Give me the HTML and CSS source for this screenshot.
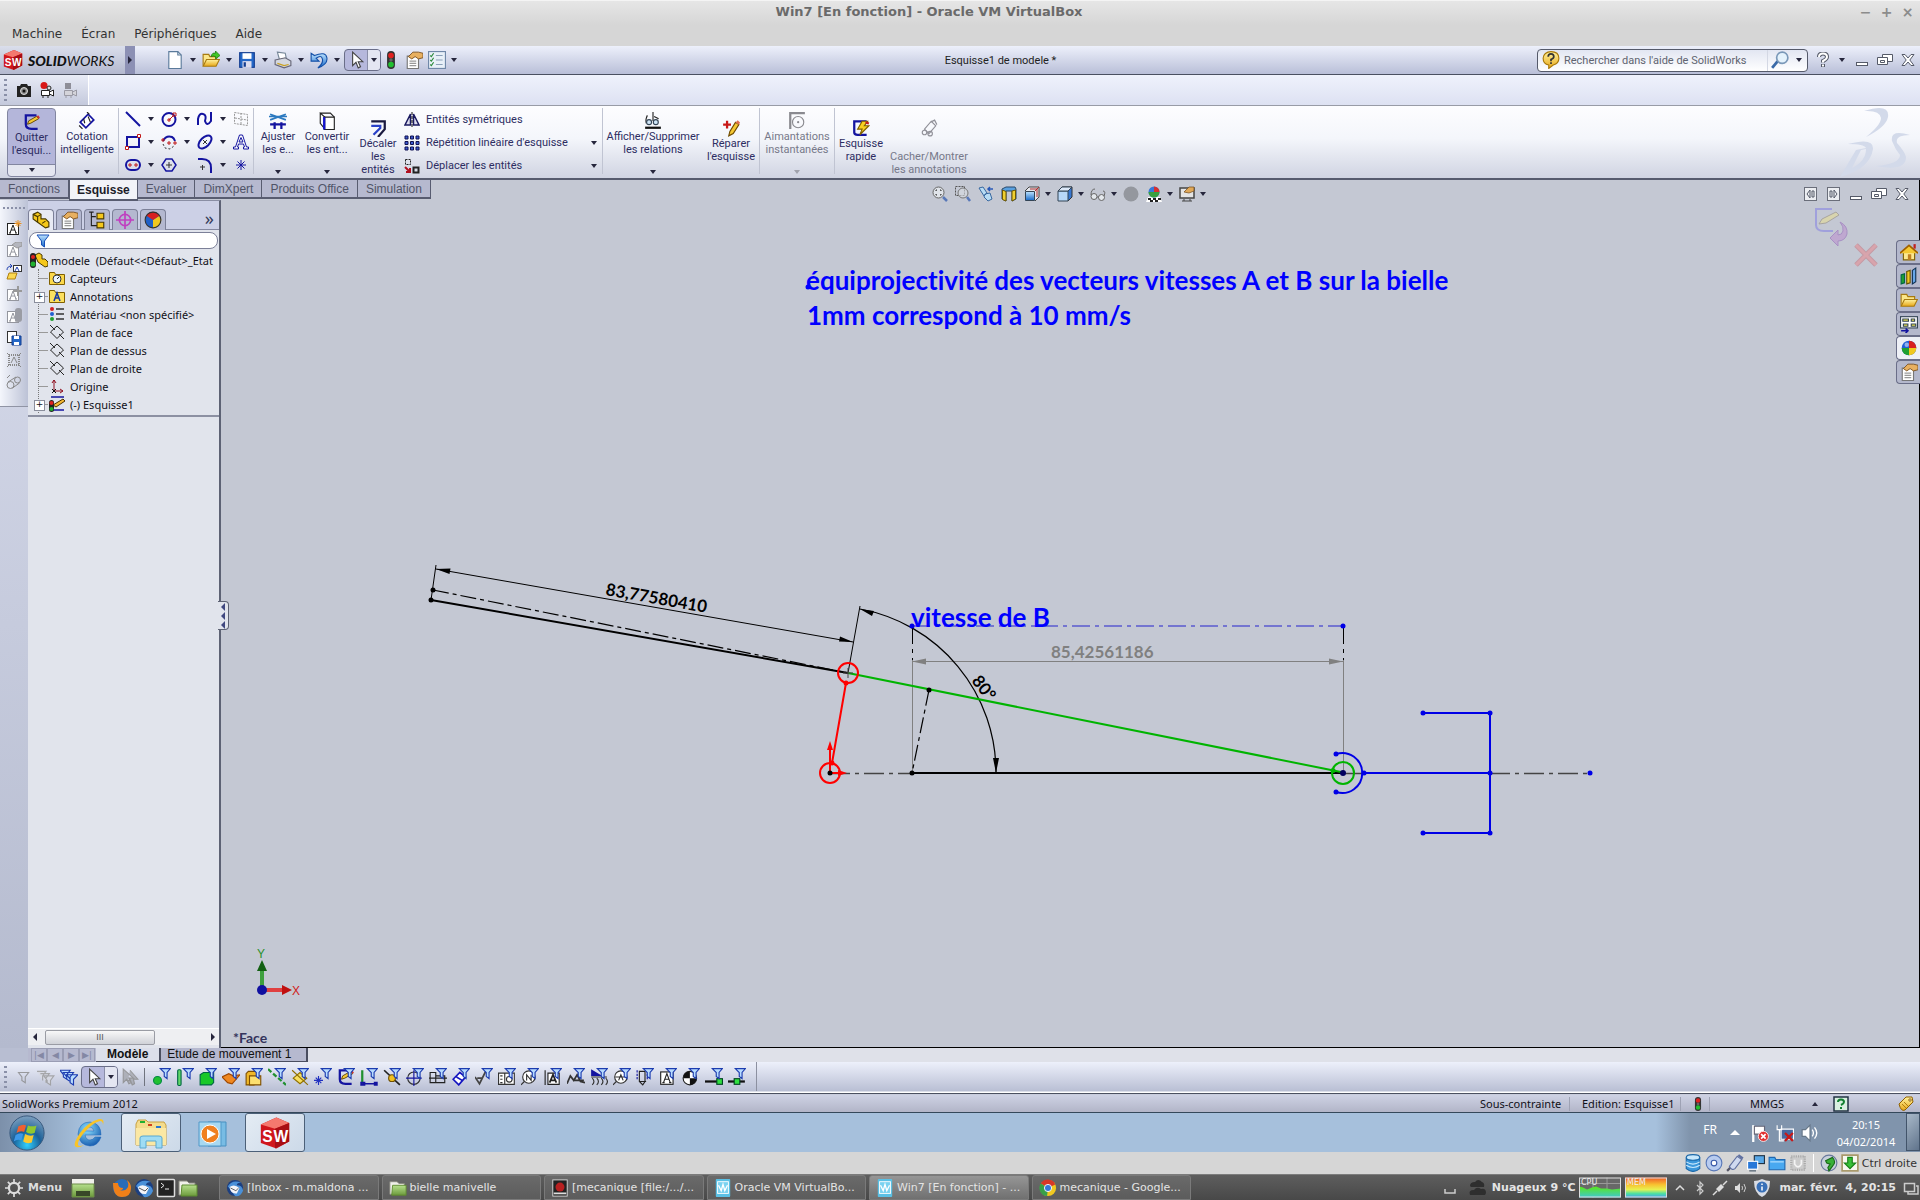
FILE: index.html
```html
<!DOCTYPE html>
<html lang="fr">
<head>
<meta charset="utf-8">
<title>Win7 [En fonction] - Oracle VM VirtualBox</title>
<link rel="stylesheet" href="styles.css">
</head>
<body>
<svg class="defs" aria-hidden="true">
  <defs>
    <linearGradient id="gBlue" x1="0" y1="0" x2="0" y2="1"><stop offset="0" stop-color="#bfe4ff"/><stop offset="1" stop-color="#1668c8"/></linearGradient>
    <linearGradient id="gGold" x1="0" y1="0" x2="0" y2="1"><stop offset="0" stop-color="#fff3a0"/><stop offset="1" stop-color="#e8a818"/></linearGradient>
    <linearGradient id="gGreen" x1="0" y1="0" x2="0" y2="1"><stop offset="0" stop-color="#b6e08c"/><stop offset="1" stop-color="#6c9a3c"/></linearGradient>
    <linearGradient id="gHeat" x1="0" y1="0" x2="0" y2="1"><stop offset="0" stop-color="#f05a28"/><stop offset=".35" stop-color="#f8c030"/><stop offset=".6" stop-color="#e8f050"/><stop offset=".8" stop-color="#50e0a0"/><stop offset="1" stop-color="#40a0f0"/></linearGradient>
    <linearGradient id="gCpu" x1="0" y1="0" x2="0" y2="1"><stop offset="0" stop-color="#58e818"/><stop offset="1" stop-color="#40c8d0"/></linearGradient>
    <radialGradient id="gOrb" cx=".5" cy=".85" r=".9"><stop offset="0" stop-color="#30d0ff"/><stop offset=".45" stop-color="#1a6098"/><stop offset="1" stop-color="#8aa8c4"/></radialGradient>
    <radialGradient id="gIe" cx=".4" cy=".3" r=".8"><stop offset="0" stop-color="#8be0ff"/><stop offset="1" stop-color="#0c50a8"/></radialGradient>
  </defs>
  <symbol id="funnel" viewBox="0 0 16 16"><path d="M6.500.5h9L12.500 4v5.500L10 7.500V4z" fill="#b8dcff" stroke="#1c3cb0"/></symbol>
  <symbol id="cube" viewBox="0 0 24 24"><path d="M2 6 13 1l9 4v13l-9 5-11-4z" fill="#d0161c"/><path d="M2 6 13 1l9 4-10 4z" fill="#f4786e"/><path d="M12 9l10-4v13l-10 5z" fill="#a80d14"/></symbol>
  <symbol id="lights" viewBox="0 0 16 16"><rect x="4.500" y="0" width="7" height="16" rx="3.500" fill="#333"/><circle cx="8" cy="4" r="2.500" fill="#e02020"/><circle cx="8" cy="8" r="1.500" fill="#666"/><circle cx="8" cy="12" r="2.500" fill="#20c030"/></symbol>
  <symbol id="props" viewBox="0 0 16 16"><path d="M2 4.500h10v11H2z" fill="#fff" stroke="#777"/><path d="M4 9h6M4 11h6M4 13h6" stroke="#999"/><path d="M3 5l4-4 5 0 4 1v4l-4 1-3-2-3 2z" fill="#e8b060" stroke="#7a5020" stroke-width=".8"/></symbol>
  <symbol id="arrow" viewBox="0 0 16 16"><path d="M5 1v12l3-3 2 5 2-1-2-4.500h4z" fill="#fff" stroke="#444"/></symbol>
  <symbol id="part" viewBox="0 0 16 16"><path d="M1 3l4-2 3 2v4l4 0 3 3v4l-3 1-7-5-4-3z" fill="#f5c81c" stroke="#4a3a00"/><path d="M1 3l4 2v5M5 5l3-2M9 11l3-2" stroke="#4a3a00"/></symbol>
  <symbol id="pencil" viewBox="0 0 16 16"><path d="M12 2H2.500v8q0 4 5 4H13" stroke="#1414a0" stroke-width="2"/><path d="M4 10l1-3 7-4 2 2-7 4z" fill="#f5c832" stroke="#5a4000" stroke-width=".8"/><path d="M12 3l2 2 1-1-1.500-2z" fill="#d03030"/></symbol>
  <symbol id="ball" viewBox="0 0 16 16"><circle cx="8" cy="8" r="6.500" fill="#2060d8"/><path d="M8 1.500A6.500 6.500 0 0 1 14.500 8H8z" fill="#d82020"/><path d="M14.500 8A6.500 6.500 0 0 1 8 14.500V8z" fill="#f0c820"/><path d="M8 14.500A6.500 6.500 0 0 1 1.500 8H8z" fill="#20a030"/><circle cx="6" cy="5" r="2" fill="#fff" opacity=".5"/></symbol>
  <symbol id="folder" viewBox="0 0 16 16"><path d="M1 13V3h5l1 2h6v3" fill="#fbe68a" stroke="#a87a10"/><path d="M1 13.500l3-6h11.500l-3 6z" fill="url(#gGold)" stroke="#a87a10"/></symbol>
  <symbol id="plane" viewBox="0 0 16 16"><path d="M8 2l6.500 6L8 14.500 1.500 8zM1 1l5 5M10 10l5 5" stroke="#222"/></symbol>
  <symbol id="atext" viewBox="0 0 16 16"><rect x="1.500" y="3.500" width="11" height="11" fill="#fff" stroke="currentColor"/><path d="M4 13l3-8 3 8M5 10h4M3 13h2M9 13h2" stroke="currentColor"/></symbol>
  <symbol id="min" viewBox="0 0 16 16"><rect x="2.500" y="10.500" width="11" height="3" fill="#fff" stroke="#555a68"/></symbol>
  <symbol id="restore" viewBox="0 0 16 16"><path d="M5.500 2.500h10v7h-10z" fill="#fff" stroke="#555a68"/><path d="M.5 5.500h10v7H.5z" fill="#fff" stroke="#555a68"/><path d="M3.500 8.500h4v2h-4z" stroke="#555a68"/></symbol>
  <symbol id="close" viewBox="0 0 16 16"><path d="M2 2.500h3l3 3.500 3-3.500h3L9.800 8l4.200 5.500h-3L8 10l-3 3.500H2L6.200 8z" fill="#fff" stroke="#555a68"/></symbol>
  <symbol id="bird" viewBox="0 0 20 20"><circle cx="10" cy="10" r="9" fill="#1c3f80"/><path d="M2 8q5-8 15-4-5 0-5 3 6 0 7 6-3 7-9 6" fill="#4a90d8"/><path d="M4 9q5-4 11 1l-3 6q-7 1-8-7z" fill="#f4f4f8"/><path d="M5 10l6 3 3-3" stroke="#555"/></symbol>
  <symbol id="gfolder" viewBox="0 0 20 20"><path d="M1 3h8l2 2h6v12H1z" fill="#f0f0ea" stroke="#8a8a80"/><path d="M4 7h15v11H3z" fill="url(#gGreen)" stroke="#5d8a30"/></symbol>
  <symbol id="vm" viewBox="0 0 20 20"><rect x="2" y="0" width="16" height="20" rx="1" fill="#5bc0e4"/><rect x="4" y="3" width="12" height="13" fill="#7ad2f0" stroke="#fff"/><path d="M5 7l3 6 2-7 2 7 3-6" stroke="#fff" stroke-width="1.500"/></symbol>
</svg>

<header class="vbox-head">
  <div class="vbox-title">
    <h1>Win7 [En fonction] - Oracle VM VirtualBox</h1>
    <div class="vbox-ctl"><button aria-label="Réduire">−</button><button aria-label="Agrandir">+</button><button aria-label="Fermer">×</button></div>
  </div>
  <nav class="vbox-menu"><button>Machine</button><button>Écran</button><button>Périphériques</button><button>Aide</button></nav>
</header>

<div class="sw-bar">
  <div class="brand"><svg class="i22" viewBox="0 0 24 24"><use href="#cube"/><text x="3" y="18" class="cube-s">S</text><text x="11" y="18" class="cube-s">W</text></svg><span class="brand-name"><b>SOLID</b>WORKS</span></div>
  <button class="brand-arrow" aria-label="Menus"><i class="caret right"></i></button>
  <div class="std-tools">
    <button class="tool" aria-label="Nouveau"><svg class="i18" viewBox="0 0 16 16"><path d="M2.500.5h8l3 3v12h-11z" fill="#fff" stroke="#5a7a9a"/><path d="M10.500.5v3h3" stroke="#5a7a9a"/></svg></button><button class="drop" aria-label="Plus"><i class="caret"></i></button>
    <button class="tool" aria-label="Ouvrir"><svg class="i18" viewBox="0 0 16 16"><use href="#folder"/><path d="M8 5q1-4 4-3V0l4 4-4 3V5q-2-1-4 0z" fill="#40c828" stroke="#1c7810" stroke-width=".7"/></svg></button><button class="drop" aria-label="Plus"><i class="caret"></i></button>
    <button class="tool" aria-label="Enregistrer"><svg class="i18" viewBox="0 0 16 16"><rect x="1.500" y="1.500" width="13" height="13" fill="#2468c8" stroke="#123c90"/><rect x="4" y="2" width="8" height="5" fill="#fff"/><rect x="4" y="9" width="8" height="6" fill="#dde"/><rect x="5" y="10" width="2" height="4" fill="#123c90"/></svg></button><button class="drop" aria-label="Plus"><i class="caret"></i></button>
    <button class="tool" aria-label="Imprimer"><svg class="i18" viewBox="0 0 16 16"><path d="M3 1l7 1 1 5-6 1z" fill="#fff" stroke="#789"/><path d="M1 8l9-2 5 3v4l-6 2-8-3z" fill="#d4d8e0" stroke="#667"/><path d="M3 11l6 2 4-1" stroke="#c8a020"/></svg></button><button class="drop" aria-label="Plus"><i class="caret"></i></button>
    <button class="tool" aria-label="Annuler"><svg class="i18" viewBox="0 0 16 16"><path d="M1 2v7h7L5.500 6.500Q10 3 11 7t-4 8q9-3 8-9T4 4z" fill="url(#gBlue)" stroke="#1450a8"/></svg></button><button class="drop" aria-label="Plus"><i class="caret"></i></button>
    <span class="split pull"><button aria-label="Sélectionner"><svg class="i18"><use href="#arrow"/></svg></button><button class="split-d" aria-label="Plus"><i class="caret"></i></button></span>
    <button class="tool wide" aria-label="Reconstruire"><svg class="i18"><use href="#lights"/></svg></button>
    <button class="tool wide" aria-label="Propriétés"><svg class="i18"><use href="#props"/></svg></button>
    <button class="tool wide" aria-label="Options"><svg class="i18" viewBox="0 0 16 16"><rect x=".5" y=".5" width="15" height="15" fill="#e8f0f8" stroke="#7088a8"/><path d="M2 4l1 1 2-3M2 8l1 1 2-3M2 12l1 1 2-3" stroke="#2a8a3a"/><path d="M7 4h6M7 8h6M7 12h6" stroke="#8aa0b8"/></svg></button><button class="drop narrow" aria-label="Plus"><i class="caret"></i></button>
  </div>
  <span class="doc-name">Esquisse1 de modele *</span>
  <div class="sw-right">
    <form class="search">
      <svg class="i18" viewBox="0 0 16 16"><path d="M8 .5c4 0 7 2 7 6s-3 5.500-5 6l-4 3 0-3C3 12 1 10 1 6.500s3-6 7-6z" fill="url(#gGold)" stroke="#a87808"/><path d="M5.500 5q0-2.500 2.500-2.500T10.500 5Q10.500 6.500 8 7.500V9M8 10v1.500" stroke="#333" stroke-width="1.500"/></svg>
      <input type="text" aria-label="Rechercher" placeholder="Rechercher dans l'aide de SolidWorks">
      <button type="button" class="search-go" aria-label="Lancer"><svg class="i18" viewBox="0 0 16 16"><path d="M1 15l5-6" stroke="#3a6aa8" stroke-width="2.500"/><circle cx="10" cy="6" r="5" fill="#e4f2fc" stroke="#7a98b8" stroke-width="1.500"/></svg></button>
      <button type="button" class="search-d" aria-label="Plus"><i class="caret"></i></button>
    </form>
    <button class="wbtn" aria-label="Aide"><svg class="i16" viewBox="0 0 16 16"><path d="M4 5q0-3.500 4-3.500T12 5q0 2-4 4v1.500M8 12v3" stroke="#555a68" stroke-width="4"/><path d="M4 5q0-3.500 4-3.500T12 5q0 2-4 4v1.500M8 12.500v2" stroke="#fff" stroke-width="2"/></svg></button>
    <button class="drop" aria-label="Plus"><i class="caret"></i></button>
    <button class="wbtn" aria-label="Réduire"><svg class="i16"><use href="#min"/></svg></button>
    <button class="wbtn" aria-label="Restaurer"><svg class="i16"><use href="#restore"/></svg></button>
    <button class="wbtn" aria-label="Fermer"><svg class="i16"><use href="#close"/></svg></button>
  </div>
</div>

<div class="capture-bar">
  <div class="capture-tools">
    <i class="grip"></i>
    <button class="cap" aria-label="Capturer"><svg class="i16" viewBox="0 0 16 16"><path d="M1 4h3l1-2h6l1 2h3v11H1z" fill="#222"/><circle cx="8" cy="9" r="3.500" fill="#888" stroke="#ddd"/><circle cx="8" cy="9" r="1.500" fill="#111"/></svg></button>
    <button class="cap" aria-label="Filmer"><svg class="i16" viewBox="0 0 16 16"><path d="M2.500 8.500h8v5h-8zM10.500 10l4-2v6l-4-2M3 15h2M8 15h2" fill="#fff" stroke="#222"/><circle cx="5" cy="3.500" r="3.500" fill="#d81818"/><circle cx="10" cy="6" r="2" fill="#ddd" stroke="#222"/></svg></button>
    <button class="cap" aria-label="Arrêter"><svg class="i16" viewBox="0 0 16 16"><path d="M2.500 8.500h8v5h-8zM10.500 10l4-2v6l-4-2M3 15h2M8 15h2" fill="#d4d4da" stroke="#9a9aa4"/><path d="M3 1h6v6H3z" fill="#8e8e98"/></svg></button>
  </div>
</div>

<div class="ribbon">
  <button class="big on w49"><svg class="i18"><use href="#pencil"/></svg><span>Quitter<br>l'esqui...</span><i class="caret"></i></button>
  <button class="big w60"><svg class="i18" viewBox="0 0 16 16"><path d="M2 9l7-7 5 5-7 7z" fill="#fff" stroke="#1414a0" stroke-width="1.500"/><path d="M5 6l1 4M9 4l2 5M1 12l3 3M8 0l2 2" stroke="#222"/></svg><span>Cotation<br>intelligente</span><i class="caret"></i></button>
  <i class="sep"></i>
  <div class="sketch-grid">
    <button aria-label="Ligne"><svg class="i16" viewBox="0 0 16 16"><path d="M1 1l14 14" stroke="#1414a0" stroke-width="2"/></svg></button><button aria-label="Plus"><i class="caret"></i></button>
    <button aria-label="Cercle"><svg class="i16" viewBox="0 0 16 16"><circle cx="8" cy="8.500" r="6.500" stroke="#1414a0" stroke-width="2"/><path d="M8 9l4-4M7 8h2v2H7zM12 2h3v3h-3z" stroke="#c01818"/></svg></button><button aria-label="Plus"><i class="caret"></i></button>
    <button aria-label="Spline"><svg class="i16" viewBox="0 0 16 16"><path d="M1 14V8Q2 2 6 3t2 7q2 6 6 0V1" stroke="#1414a0" stroke-width="2"/></svg></button><button aria-label="Plus"><i class="caret"></i></button>
    <button aria-label="Plan"><svg class="i16" viewBox="0 0 16 16"><path d="M1.500 1.500l13 2v11l-13-2zM8 2v12M2 7l12 2" stroke="#999" stroke-dasharray="2 1"/></svg></button>
    <button aria-label="Rectangle"><svg class="i16" viewBox="0 0 16 16"><rect x="2" y="3" width="12" height="10" stroke="#1414a0" stroke-width="2"/><path d="M.5 12.500h3v3h-3zM12.500.5h3v3h-3z" fill="#fff" stroke="#c01818"/></svg></button><button aria-label="Plus"><i class="caret"></i></button>
    <button aria-label="Arc"><svg class="i16" viewBox="0 0 16 16"><path d="M2 7q3-6 9-4 2 1 3 4" stroke="#1414a0" stroke-width="2"/><path d="M2 10l2 4 5 1 4-3" stroke="#333" stroke-dasharray="2 2"/><path d="M7 8h2v2H7zM13 8h2v2h-2zM1 5h2v2H1z" stroke="#c01818"/></svg></button><button aria-label="Plus"><i class="caret"></i></button>
    <button aria-label="Ellipse"><svg class="i16" viewBox="0 0 16 16"><ellipse cx="8" cy="8" rx="8" ry="4.500" transform="rotate(-45 8 8)" stroke="#1414a0" stroke-width="2"/><path d="M6 10l4-4M6 6l4 4" stroke="#333"/></svg></button><button aria-label="Plus"><i class="caret"></i></button>
    <button aria-label="Texte"><svg class="i16" viewBox="0 0 16 16"><path d="M6.500 1h3l4 12h2v2h-5v-2h1l-1-3h-5l-1 3h1v2H.5v-2h2zM6 8h4L8 3.500z" fill="#fff" stroke="#1414a0"/></svg></button>
    <button aria-label="Rainure"><svg class="i16" viewBox="0 0 16 16"><rect x="1" y="3" width="14" height="10" rx="5" stroke="#1414a0" stroke-width="2"/><path d="M4 7h2v2H4zM10 7h2v2h-2z" stroke="#c01818"/></svg></button><button aria-label="Plus"><i class="caret"></i></button>
    <button aria-label="Polygone"><svg class="i16" viewBox="0 0 16 16"><path d="M5 2h6l4 6-4 6H5L1 8z" stroke="#1414a0" stroke-width="1.500"/><path d="M5 8h6M8 5v6" stroke="#333"/></svg></button><span></span>
    <button aria-label="Congé"><svg class="i16" viewBox="0 0 16 16"><path d="M1 2h4q9 0 9 9v5" stroke="#1414a0" stroke-width="2"/><path d="M3 10h5M5.500 8v5" stroke="#333"/></svg></button><button aria-label="Plus"><i class="caret"></i></button>
    <button aria-label="Point"><svg class="i16" viewBox="0 0 16 16"><path d="M8 3v10M3 8h10M4.500 4.500l7 7M11.500 4.500l-7 7" stroke="#1414a0"/></svg></button>
  </div>
  <i class="sep"></i>
  <button class="big w48"><svg class="i18" viewBox="0 0 16 16"><path d="M1 11h14M5 9v6M11 9v6" stroke="#1414a0" stroke-width="2"/><path d="M1 2l14 5M1 7l14-5M0 4h16" stroke="#2c7ac0" stroke-width="1.500"/></svg><span>Ajuster<br>les e...</span><i class="caret"></i></button>
  <button class="big w50"><svg class="i18" viewBox="0 0 16 16"><path d="M5.500 4.500h9v11h-9z" fill="#fff" stroke="#222"/><path d="M2 1v9l4 5V4.500zM2 1h9l3.500 3.500" stroke="#222"/><path d="M5.500 4.500v11" stroke="#1414d0" stroke-width="2"/></svg><span>Convertir<br>les ent...</span><i class="caret"></i></button>
  <button class="big low w52"><svg class="i18" viewBox="0 0 16 16"><path d="M2 2h12v7l-6 7" stroke="#1a1a40" stroke-width="2"/><path d="M2 6h8v2l-6 6" stroke="#2840c8" stroke-width="2"/></svg><span>Décaler<br>les<br>entités</span></button>
  <div class="list">
    <button><svg class="i16" viewBox="0 0 16 16"><path d="M6.500 2v11H1zM9.500 2v11H15z" fill="#dde" stroke="#1a1a60" stroke-width="1.500"/><path d="M8 0v16" stroke="#111" stroke-dasharray="3 1"/></svg><span>Entités symétriques</span></button>
    <button><svg class="i16" viewBox="0 0 16 16"><path d="M1 1h3v3H1zM6.500 1h3v3h-3zM12 1h3v3h-3zM1 6.500h3v3H1zM6.500 6.500h3v3h-3zM12 6.500h3v3h-3zM1 12h3v3H1zM6.500 12h3v3h-3zM12 12h3v3h-3z" fill="#3858d0" stroke="#101050"/></svg><span>Répétition linéaire d'esquisse</span><i class="caret"></i></button>
    <button><svg class="i16" viewBox="0 0 16 16"><path d="M1.500 1.500h5v5h-5z" stroke="#222" stroke-dasharray="2 1"/><path d="M1 9l5 5M6 10v4H2" stroke="#b01020" stroke-width="2"/><path d="M9.500 9.500h5v5h-5z" stroke="#222" stroke-width="2"/></svg><span>Déplacer les entités</span><i class="caret"></i></button>
  </div>
  <i class="sep"></i>
  <button class="big w100"><svg class="i18" viewBox="0 0 16 16"><path d="M1 14h14" stroke="#111" stroke-width="2"/><path d="M8 0v8M3 3q-2 4-1 7M9 4l4 2" stroke="#222"/><circle cx="4.500" cy="9" r="2.200" fill="#cfe6f8" stroke="#345"/><circle cx="10.500" cy="9" r="2.200" fill="#cfe6f8" stroke="#345"/></svg><span>Afficher/Supprimer<br>les relations</span><i class="caret"></i></button>
  <button class="big low w56"><svg class="i18" viewBox="0 0 16 16"><path d="M1 5h7M4.500 1.500v7" stroke="#c81818" stroke-width="2"/><path d="M6 15l1-4 5-8 3 2-5 8z" fill="#f5c832" stroke="#704c00"/><path d="M12 3l3 2 1-2-2-2z" fill="#e07050"/></svg><span>Réparer<br>l'esquisse</span></button>
  <i class="sep"></i>
  <button class="big w74" disabled><svg class="i18" viewBox="0 0 16 16"><path d="M2 15V1h13" stroke="#8a8a90" stroke-width="2"/><circle cx="9" cy="9" r="5" stroke="#8a8a90"/><circle cx="9" cy="9" r="1" fill="#8a8a90"/></svg><span>Aimantations<br>instantanées</span><i class="caret"></i></button>
  <i class="sep"></i>
  <button class="big low w52"><svg class="i18" viewBox="0 0 16 16"><path d="M13 2H2v10q0 2 3 2h8" stroke="#1414a0" stroke-width="2"/><path d="M9 2h5l-3 4h4l-8 8 2-5H5z" fill="#f8d020" stroke="#806000"/><path d="M12 3l3 1" stroke="#c02020" stroke-width="2"/></svg><span>Esquisse<br>rapide</span></button>
  <button class="big low tall w84" disabled><svg class="i18" viewBox="0 0 16 16"><path d="M4 9l6-7 4 4-6 7zM9 3l4-2 2 4" stroke="#909098"/><circle cx="4" cy="12" r="2" stroke="#909098"/><circle cx="9" cy="13" r="2" stroke="#909098"/></svg><span>Cacher/Montrer<br>les annotations</span></button>
  <svg class="ds" viewBox="0 0 72 70"><path d="M24 4Q50-4 48 10 46 20 26 30 41 18 41 11 40 3 24 4zM8 37Q34 30 33 42 30 62 0 70L16 43 26 41Q24 37 8 37zM12 61q14-7 14-19l-5 1zM70 28Q50 22 52 34q3 8 8 14 0 9-24 11 30 6 30-9-1-5-9-14-2-8 13-8z"/></svg>
</div>

<main class="workspace">
  <nav class="cmd-tabs"><button>Fonctions</button><button class="on">Esquisse</button><button>Evaluer</button><button>DimXpert</button><button>Produits Office</button><button>Simulation</button></nav>

  <aside class="side">
    <div class="strip">
      <i class="grip-h"></i>
      <button class="st" aria-label="Note"><svg class="i16"><use href="#atext"/></svg><svg class="i16 over" viewBox="0 0 16 16"><path d="M12 0v7M8.500 3.500h7M9.500 1l5 5M14.500 1l-5 5" stroke="#e89020"/></svg></button>
      <button class="st off" aria-label="Style"><svg class="i16"><use href="#atext"/></svg><svg class="i16 over" viewBox="0 0 16 16"><path d="M6 3l4-3h6v4l-5 2z" fill="#b4b6be" stroke="#999"/></svg></button>
      <button class="st" aria-label="Charger"><svg class="i16" viewBox="0 0 16 16"><rect x="7.500" y="1.500" width="8" height="6" fill="#fff" stroke="#333"/><path d="M9 7l2-4 2 4M1 6q0-4 5-4M4 0l2 2-2 2" stroke="#2040b0"/><path d="M1 15l2-6h8l-2 6z" fill="#fbd850" stroke="#b08010"/></svg></button>
      <button class="st off" aria-label="Ajouter"><svg class="i16"><use href="#atext"/></svg><svg class="i16 over" viewBox="0 0 16 16"><path d="M12 0v10M7 5h9" stroke="#999" stroke-width="2"/></svg></button>
      <button class="st off" aria-label="Mettre à jour"><svg class="i16"><use href="#atext"/></svg><svg class="i16 over" viewBox="0 0 16 16"><rect x="9" y="0" width="7" height="14" rx="3" fill="#9a9ca4"/></svg></button>
      <button class="st" aria-label="Enregistrer"><svg class="i16" viewBox="0 0 16 16"><rect x="1.500" y="1.500" width="9" height="11" fill="#fff" stroke="#333"/><path d="M6 6h9v9H6z" fill="#2468c8" stroke="#123c90"/><path d="M8 6h5v3H8zM8 12h5v3H8z" fill="#fff"/></svg></button>
      <button class="st off" aria-label="Bloc"><svg class="i16" viewBox="0 0 16 16"><rect x="3" y="3" width="10" height="10" stroke="#888" stroke-width="2" stroke-dasharray="1 1"/><path d="M5 11l3-6 3 6M1 1l2 2M15 1l-2 2M1 15l2-2M15 15l-2-2" stroke="#888"/></svg></button>
      <button class="st off" aria-label="Courroie"><svg class="i16" viewBox="0 0 16 16"><circle cx="4.500" cy="11" r="3.500" stroke="#888"/><circle cx="11.500" cy="6" r="3" stroke="#888"/><path d="M2 8l8-5M6.500 14l7-5M1 4l3-3" stroke="#888"/></svg></button>
    </div>
    <div class="panel">
      <div class="ptabs">
        <button class="on" aria-label="Arbre"><svg class="i18"><use href="#part"/></svg></button>
        <button aria-label="Propriétés"><svg class="i18"><use href="#props"/></svg></button>
        <button aria-label="Configurations"><svg class="i18" viewBox="0 0 16 16"><path d="M1 1h4M3 1v12h5M3 5h4" stroke="#222"/><path d="M8 2h6v5H8zM8 10h6v5H8z" fill="#f5c81c" stroke="#4a3a00"/></svg></button>
        <button aria-label="DimXpert"><svg class="i18" viewBox="0 0 16 16"><circle cx="8" cy="8" r="5" stroke="#c040c0" stroke-width="1.500"/><path d="M8 0v16M0 8h16" stroke="#c040c0" stroke-width="1.500"/></svg></button>
        <button aria-label="Affichage"><svg class="i18" viewBox="0 0 16 16"><circle cx="8" cy="8" r="7" fill="#2060c8"/><path d="M8 8l6-4a7 7 0 0 1-6 11z" fill="#f0c820"/><path d="M8 8L2 4a7 7 0 0 1 12 0z" fill="#d82020"/><circle cx="8" cy="8" r="7" stroke="#333"/></svg></button>
        <span class="more">»</span>
      </div>
      <label class="filter"><svg class="i16" viewBox="0 0 16 16"><path d="M2 2h12L9.500 8v6L6.500 12V8z" fill="url(#gBlue)" stroke="#1850b8"/></svg><input type="text" aria-label="Filtre"></label>
      <div class="tree">
        <div class="root"><svg class="i18" viewBox="0 0 18 16"><path d="M5 3l4-2 3 2v4h3l3 3v4l-3 1-7-5z" fill="#f5c81c" stroke="#4a3a00"/><rect x="0" y="1" width="6" height="15" rx="3" fill="#222"/><circle cx="3" cy="5" r="2" fill="#e02020"/><circle cx="3" cy="12" r="2.500" fill="#20b030"/></svg><span>modele&nbsp; (Défaut&lt;&lt;Défaut&gt;_Etat</span></div>
        <ul>
          <li><svg class="i16" viewBox="0 0 16 16"><path d="M.5 2.500h5l1 2h9v10H.5z" fill="#fbd84a" stroke="#806000"/><circle cx="8" cy="9" r="4" fill="#e8f4ff" stroke="#333"/><path d="M8 9l2-2" stroke="#222"/></svg>Capteurs</li>
          <li class="plus"><svg class="i16" viewBox="0 0 16 16"><path d="M.5 2.500h5l1 2h9v10H.5z" fill="#fbe060" stroke="#806000"/><path d="M5 13l3-8 3 8M6 10h4" stroke="#1838a0" stroke-width="1.500"/></svg>Annotations</li>
          <li><svg class="i16" viewBox="0 0 16 16"><circle cx="3" cy="3" r="2" fill="#d02020"/><circle cx="3" cy="8" r="2" fill="#2060d0"/><circle cx="3" cy="13" r="2" fill="#20a030"/><path d="M7 3h8M7 8h8M7 13h8" stroke="#333" stroke-width="1.500"/></svg>Matériau &lt;non spécifié&gt;</li>
          <li><svg class="i16"><use href="#plane"/></svg>Plan de face</li>
          <li><svg class="i16"><use href="#plane"/></svg>Plan de dessus</li>
          <li><svg class="i16"><use href="#plane"/></svg>Plan de droite</li>
          <li><svg class="i16" viewBox="0 0 16 16"><path d="M5 13V2M3 5l2-3 2 3M5 13h9M11 11l3 2-3 2" stroke="#901020"/><path d="M3 11l4 4M7 11l-4 4" stroke="#111"/></svg>Origine</li>
          <li class="plus"><svg class="i16" viewBox="0 0 16 16"><path d="M2 1h13M4 14h11" stroke="#1414a0" stroke-width="1.500"/><path d="M4 9l10-6 2 2-9 6z" fill="#f5b832" stroke="#4a3000"/><rect x="0" y="4" width="5" height="12" rx="2.500" fill="#222"/><circle cx="2.500" cy="7" r="2" fill="#e02020"/><circle cx="2.500" cy="13" r="2" fill="#20b030"/></svg>(-) Esquisse1</li>
        </ul>
      </div>
      <div class="panel-rest"></div>
      <div class="hscroll"><i class="caret left"></i><i class="thumb">III</i><i class="caret right"></i></div>
      <button class="handle" aria-label="Replier"><i class="caret left"></i><i class="caret left"></i><i class="caret left"></i></button>
    </div>
  </aside>

  <section class="canvas">
    <svg class="sketch" role="img" aria-label="Esquisse1">
      <g transform="translate(-221 -180)">
        <text class="note" x="806" y="290">équiprojectivité des vecteurs vitesses A et B sur la bielle</text>
        <text class="note" x="807" y="325">1mm correspond à 10 mm/s</text>
        <circle cx="808" cy="287" r="2.500" fill="#00f"/>
        <g stroke="#5a5ad0" stroke-width="1.500"><path d="M912 626H1343" stroke-dasharray="18 5 4 5"/></g>
        <text class="note" x="911" y="627">vitesse de B</text>
        <g stroke="#808080">
          <path d="M912.500 660V773M1343.500 660V773M912 661.500H1343"/>
          <path d="M912 661.500l14-3v6zM1343 661.500l-14-3v6z" fill="#808080" stroke="none"/>
        </g>
        <text class="dim gray" x="1051" y="658">85,42561186</text>
        <g stroke="#000">
          <path d="M912.500 626V660M1343.500 626V660" stroke-dasharray="18 5 4 5"/>
          <path d="M436 565L431 600M860 606L848 673M436 569L853 642"/>
          <path d="M433 590L848 673M929 690L912 773" stroke-dasharray="16 4 4 4" stroke-width="1.200"/>
          <path d="M830 773.500H912M1490 773.500H1590M1343 773.500H1364" stroke="#444" stroke-width="1.500" stroke-dasharray="20 5 4 5"/>
          <path d="M860 609A166 166 0 0 1 996 773" stroke-width="1.200"/>
          <path d="M431 600L848 673M912 773H1343" stroke-width="2"/>
          <path d="M436 569l14.500-.5-1 5.500zM853 642l-14-.5 1-5zM860 609l14 2-2 5zM996 773l-3-15h6z" fill="#000" stroke="none"/>
        </g>
        <text class="dim" transform="translate(605 595) rotate(10)">83,77580410</text>
        <text class="dim" transform="translate(971 681) rotate(52)">80°</text>
        <path d="M848 673L1341 772" stroke="#00b400" stroke-width="2"/>
        <g stroke="#f00" stroke-width="2"><circle cx="848" cy="673" r="10"/><circle cx="830" cy="773" r="10"/><path d="M846 683L832 763M830 773V748M830 773H840"/><path d="M830 741l3 9h-6zM847 773l-9 3v-6z" fill="#f00" stroke="none"/><circle cx="846" cy="683" r="1.500"/><circle cx="832" cy="763" r="1.500"/></g>
        <g stroke="#00b400" stroke-width="2"><circle cx="1343" cy="773" r="11"/><circle cx="1333" cy="770.500" r="1.500"/></g>
        <path d="M1336 754A20 20 0 1 1 1336 792M1364 773H1490M1423 713H1490V833H1423" stroke="#0000e6" stroke-width="2"/>
        <path d="M848 668v10M843 673h10" stroke="#444"/>
        <g fill="#000"><circle cx="433" cy="590" r="2.500"/><circle cx="431" cy="600" r="2.500"/><circle cx="929" cy="690" r="2.500"/><circle cx="912" cy="773" r="2.500"/><circle cx="830" cy="773" r="2.500"/></g>
        <g fill="#0000e6"><circle cx="912" cy="626" r="2.500"/><circle cx="1343" cy="626" r="2.500"/><circle cx="1343" cy="773" r="3" fill="#000060"/><circle cx="1336" cy="754" r="2.500"/><circle cx="1336" cy="792" r="2.500"/><circle cx="1364" cy="773" r="2.500"/><circle cx="1423" cy="713" r="2.500"/><circle cx="1490" cy="713" r="2.500"/><circle cx="1490" cy="773" r="2.500"/><circle cx="1490" cy="833" r="2.500"/><circle cx="1423" cy="833" r="2.500"/><circle cx="1590" cy="773" r="2.500"/></g>
      </g>
    </svg>
    <div class="view-head">
      <div class="view-tools">
        <button class="vt" aria-label="Zoom au mieux"><svg class="i16" viewBox="0 0 16 16"><circle cx="6.500" cy="6.500" r="5.500" fill="#e0e4ea" stroke="#666"/><path d="M4 5V4h1M8 4h1v1M9 8v1H8M5 9H4V8" stroke="#333"/><path d="M11 11l4 4" stroke="#5878b8" stroke-width="2.500"/></svg></button>
        <button class="vt" aria-label="Zoom fenêtre"><svg class="i16" viewBox="0 0 16 16"><rect x=".5" y=".5" width="9" height="9" stroke="#555" stroke-dasharray="2 1"/><circle cx="8" cy="7" r="5" fill="#d8dce2" fill-opacity=".6" stroke="#777"/><path d="M12 11l3 4" stroke="#5878b8" stroke-width="2.500"/></svg></button>
        <button class="vt" aria-label="Vue précédente"><svg class="i16" viewBox="0 0 16 16"><path d="M1 2l4-1 4 6-3 3zM7 8l5-1 2 6-4 2-4-4z" fill="#b8dcf4" stroke="#3868a0"/><path d="M15 3h-5M12 1l-2 2 2 2" stroke="#2858b8" stroke-width="1.500"/></svg></button>
        <button class="vt" aria-label="Coupe"><svg class="i16" viewBox="0 0 16 16"><path d="M1 3l4-2h9l1 2v10l-4 2V5H5v10l-4-2z" fill="#58a0e0" stroke="#28486a"/><path d="M1.500 4L5 5.500V15l-3.500-1.500zM11 5l3.500-1v9L11 15z" fill="#f0d030" stroke="#705800"/></svg></button>
        <button class="vt" aria-label="Orientation"><svg class="i16" viewBox="0 0 16 16"><path d="M1 5l4-4h10v10l-4 4" fill="#e4e6ec" stroke="#444"/><path d="M1.500 5.500h9v9h-9z" fill="url(#gBlue)" stroke="#345"/><path d="M13 3v8M6 3h7M11 5l4-4" stroke="#b03030"/></svg></button><button class="vd" aria-label="Plus"><i class="caret"></i></button>
        <button class="vt" aria-label="Style"><svg class="i16" viewBox="0 0 16 16"><path d="M1 5l4-4h10v10l-4 4z" fill="#3878d0" stroke="#333"/><path d="M1 5h10v10H1z" fill="#b8d8f8" stroke="#345"/><path d="M5 1h10l-4 4H1z" fill="#dce8f8" stroke="#345"/></svg></button><button class="vd" aria-label="Plus"><i class="caret"></i></button>
        <button class="vt" aria-label="Masquer"><svg class="i16" viewBox="0 0 16 16"><circle cx="4" cy="10.500" r="3" fill="#e4e8ec" stroke="#666"/><circle cx="11.500" cy="11.500" r="3" fill="#e4e8ec" stroke="#666"/><path d="M7 11h2M1 9Q1 3 5 3M14 10q2-5-1-5" stroke="#666"/></svg></button><button class="vd" aria-label="Plus"><i class="caret"></i></button>
        <button class="vt" aria-label="Apparence"><svg class="i16" viewBox="0 0 16 16"><circle cx="8" cy="8" r="7.500" fill="#94979e"/></svg></button>
        <button class="vt" aria-label="Scène"><svg class="i16" viewBox="0 0 16 16"><path d="M2 11h12l2 5H0z" fill="#fff"/><path d="M2 12h3v2H2zM7 12h3v2H7zM12 12h3v2h-3zM4 14h3v2H4zM9 14h3v2H9z" fill="#222"/><circle cx="8" cy="6" r="5.500" fill="#3878d8"/><path d="M8 .5A5.500 5.500 0 0 1 13.500 6H8z" fill="#d83030"/><path d="M13.500 6A5.500 5.500 0 0 1 2.500 6z" fill="#38a040"/></svg></button><button class="vd" aria-label="Plus"><i class="caret"></i></button>
        <button class="vt" aria-label="Vue"><svg class="i16" viewBox="0 0 16 16"><rect x="1" y="2" width="14" height="10" fill="#e4e4e4" stroke="#444" stroke-width="1.500"/><path d="M5 13v2M11 13v2M3 15h10" stroke="#444"/><path d="M5 6l5-5h5v4l-5 2z" fill="#e0a858" stroke="#704818" stroke-width=".7"/></svg></button><button class="vd" aria-label="Plus"><i class="caret"></i></button>
      </div>
      <div class="doc-ctl">
        <button aria-label="Gauche"><svg class="i16" viewBox="0 0 16 16"><rect x="2.500" y="1.500" width="12" height="13" fill="#eceef2" stroke="#6a6e7a"/><path d="M8 4v8L5 8zM10 5h2v6h-2z" stroke="#555a68"/></svg></button>
        <button aria-label="Droite"><svg class="i16" viewBox="0 0 16 16"><rect x="2.500" y="1.500" width="12" height="13" fill="#eceef2" stroke="#6a6e7a"/><path d="M9 4v8l3-4zM5 5h2v6H5z" stroke="#555a68"/></svg></button>
        <button aria-label="Réduire"><svg class="i16"><use href="#min"/></svg></button>
        <button aria-label="Restaurer"><svg class="i16"><use href="#restore"/></svg></button>
        <button aria-label="Fermer"><svg class="i16"><use href="#close"/></svg></button>
      </div>
    </div>
    <svg class="confirm" viewBox="0 0 70 60"><path d="M18 2H2v16q0 6 8 6h9" stroke="#a0a0dc" stroke-width="2"/><path d="M5 17l3-5 14-7 3 3-13 8z" fill="#d8d4ae" stroke="#a8a4a0"/><path d="M26 15q8 4 7 12-2 7-9 7v5l-8-8 8-8v5q4 0 5-4t-3-9z" fill="#bfa8d0" stroke="#a890c4"/><path d="M42 38l20 20M62 38L42 58" stroke="#c49aa4" stroke-width="5"/><path d="M42 38l20 20M62 38L42 58" stroke="#d8a4ac" stroke-width="3"/></svg>
    <nav class="task-tabs">
      <button aria-label="Ressources"><svg class="i18" viewBox="0 0 16 16"><path d="M3 8h10v7H3z" fill="#fce890" stroke="#806000"/><path d="M0 9l8-7 8 7" fill="#f5c832" stroke="#a06000" stroke-width="1.500"/><path d="M12 1h2v4h-2z" fill="#c02020"/><path d="M7 10h3v5H7z" fill="#c08020"/></svg></button>
      <button aria-label="Bibliothèque"><svg class="i18" viewBox="0 0 16 16"><path d="M1 7l3-1v8l-3 1z" fill="#20a030" stroke="#064"/><path d="M6 4l3-1v11l-3 1z" fill="#f0c820" stroke="#650"/><path d="M11 3l3-2v12l-3 2z" fill="#68a8e8" stroke="#135"/></svg></button>
      <button aria-label="Explorateur"><svg class="i18"><use href="#folder"/></svg></button>
      <button aria-label="Palette"><svg class="i18" viewBox="0 0 16 16"><rect x=".5" y="1.500" width="15" height="10" fill="#fff" stroke="#345"/><path d="M2.500 3.500h5v2h-5zM10 3.500h3v2h-3zM3 8h4v2H3zM10 8h4v2h-4z" fill="#e8e050" stroke="#345"/><path d="M1 14h6M5 12l2 2-2 2" stroke="#1414a0" stroke-width="1.500"/></svg></button>
      <button class="on" aria-label="Apparences"><svg class="i18"><use href="#ball"/></svg></button>
      <button aria-label="Personnalisées"><svg class="i18"><use href="#props"/></svg></button>
    </nav>
    <svg class="triad" viewBox="0 0 44 56"><path d="M9 42V22" stroke="#3ea03e" stroke-width="4"/><path d="M9 14l5 11H4z" fill="#126012"/><path d="M12 44H32" stroke="#e04040" stroke-width="4"/><path d="M39 44l-10-5v10z" fill="#c01010"/><circle cx="9" cy="44" r="5" fill="#1010a0"/></svg>
    <span class="ax y">Y</span><span class="ax x">X</span>
    <span class="view-name">*Face</span>
  </section>
</main>

<div class="model-tabs">
  <div class="nav4"><button aria-label="Premier">|◀</button><button aria-label="Précédent">◀</button><button aria-label="Suivant">▶</button><button aria-label="Dernier">▶|</button></div>
  <button class="mt on">Modèle</button><button class="mt">Etude de mouvement 1</button>
</div>

<div class="filter-bar">
  <div class="filter-tools">
    <i class="grip"></i>
    <button class="ft dim1" aria-label="Filtres"><svg class="i18" viewBox="0 0 16 16"><path d="M4 4h9L10 8v5L7 11V8z" stroke="#888"/></svg></button>
    <button class="ft dim1" aria-label="Effacer"><svg class="i18" viewBox="0 0 16 16"><path d="M0 3h8L5 7v4M3 5h8L8 9v4M6 7h9l-3 4v4l-3-2v-2z" stroke="#999" fill="#d8dae2"/></svg></button>
    <button class="ft" aria-label="Tous"><svg class="i18" viewBox="0 0 16 16"><path d="M0 2h9L6 6v4L3 8V6zM3 4h9L9 8v4L6 10V8zM6 6h10l-4 4v5l-3-2v-3z" fill="#b8dcff" stroke="#1c3cb0"/></svg></button>
    <span class="split"><button aria-label="Sélectionner"><svg class="i18"><use href="#arrow"/></svg></button><button class="split-d" aria-label="Plus"><i class="caret"></i></button></span>
    <button class="ft dim1" aria-label="Inverser"><svg class="i18" viewBox="0 0 16 16"><path d="M2 1v12l3-3 2 4 2-1-2-4h4zM8 2l7 8h-4l1 4-2 1-2-5-2 2" fill="#a4a6ae" stroke="#888"/></svg></button>
    <i class="vsep"></i>
    <button class="ft" aria-label="Sommets"><svg class="i18" viewBox="0 0 16 16"><circle cx="4" cy="11" r="3.500" fill="#20c030" stroke="#084"/><use href="#funnel"/></svg></button>
    <button class="ft" aria-label="Arêtes"><svg class="i18" viewBox="0 0 16 16"><rect x="1.500" y="1.500" width="3" height="14" rx="1" fill="#60d868" stroke="#064"/><use href="#funnel"/></svg></button>
    <button class="ft" aria-label="Faces"><svg class="i18" viewBox="0 0 16 16"><path d="M1 6l3-2h9v9l-2 2H1z" fill="#18c828" stroke="#064"/><use href="#funnel"/></svg></button>
    <button class="ft" aria-label="Surfaces"><svg class="i18" viewBox="0 0 16 16"><path d="M0 8l6-3 4 2 6-1-7 8-4-1z" fill="#f08820" stroke="#a04800"/><use href="#funnel"/></svg></button>
    <button class="ft" aria-label="Volumes"><svg class="i18" viewBox="0 0 16 16"><path d="M1 5l2-2h8v10l-3 2H1z" fill="#f0b828" stroke="#805000"/><path d="M4 7h10v8H4z" fill="#fce070" stroke="#805000"/><use href="#funnel"/></svg></button>
    <button class="ft" aria-label="Axes"><svg class="i18" viewBox="0 0 16 16"><path d="M0 1l16 14" stroke="#209030" stroke-width="2" stroke-dasharray="4 2"/><use href="#funnel"/></svg></button>
    <button class="ft" aria-label="Plans"><svg class="i18" viewBox="0 0 16 16"><path d="M2 9l6-5 6 5-6 5zM1 2l14 13" fill="#f8e060" stroke="#907000"/><use href="#funnel"/></svg></button>
    <button class="ft" aria-label="Points"><svg class="i18" viewBox="0 0 16 16"><path d="M4 7v8M0 11h8M1.500 8.500l5 5M6.500 8.500l-5 5" stroke="#2030c0"/><use href="#funnel"/></svg></button>
    <button class="ft" aria-label="Esquisses"><svg class="i18"><use href="#pencil"/></svg><svg class="i18 over"><use href="#funnel"/></svg></button>
    <button class="ft" aria-label="Segments"><svg class="i18" viewBox="0 0 16 16"><path d="M2 2v12" stroke="#209030" stroke-width="2"/><path d="M2 14h13M1 13h3v2H1zM13 13h2v2h-2z" stroke="#1414a0" stroke-width="1.500"/><use href="#funnel"/></svg></button>
    <button class="ft" aria-label="Milieux"><svg class="i18" viewBox="0 0 16 16"><path d="M1 2l14 13" stroke="#222" stroke-width="1.500"/><circle cx="8" cy="9" r="3" fill="#f0c020" stroke="#705000"/><use href="#funnel"/></svg></button>
    <button class="ft" aria-label="Centres"><svg class="i18" viewBox="0 0 16 16"><circle cx="7" cy="9" r="5.500" stroke="#333"/><path d="M7 2v14M0 9h14" stroke="#1414a0"/><use href="#funnel"/></svg></button>
    <button class="ft" aria-label="Axes de révolution"><svg class="i18" viewBox="0 0 16 16"><path d="M1 4h5v9H1zM6 7h8v6H6zM0 9h16" stroke="#222"/><use href="#funnel"/></svg></button>
    <button class="ft" aria-label="Cotes"><svg class="i18" viewBox="0 0 16 16"><path d="M1 10l6-6 5 4-6 7zM4 8l5 3" fill="#fff" stroke="#1414c0" stroke-width="1.500"/><use href="#funnel"/></svg></button>
    <button class="ft" aria-label="Finition"><svg class="i18" viewBox="0 0 16 16"><path d="M0 8l4 6 6-12M2 9h4" stroke="#444" stroke-width="1.500"/><use href="#funnel"/></svg></button>
    <button class="ft" aria-label="Tolérances"><svg class="i18" viewBox="0 0 16 16"><path d="M.5 4.500h14v10H.5zM6 4v10M2 7h2M2 10h2M2 13h2" fill="#fff" stroke="#333"/><circle cx="10" cy="10" r="2.500" stroke="#333"/><use href="#funnel"/></svg></button>
    <button class="ft" aria-label="Notes"><svg class="i18" viewBox="0 0 16 16"><circle cx="7" cy="8" r="5.500" fill="#fff" stroke="#333"/><path d="M5 11V6l4 5V6M0 15l3-3" stroke="#333"/><use href="#funnel"/></svg></button>
    <button class="ft" aria-label="Références"><svg class="i18" viewBox="0 0 16 16"><path d="M1 2v13M3.500 4.500h10v10h-10z" fill="#fff" stroke="#222"/><path d="M5 13l3-7 3 7M6 11h4" stroke="#222" stroke-width="1.500"/><use href="#funnel"/></svg></button>
    <button class="ft" aria-label="Soudures"><svg class="i18" viewBox="0 0 16 16"><path d="M0 14l3-7 3 4 3-5 3 6 4 1M6 11h9" stroke="#333" stroke-width="1.500"/><use href="#funnel"/></svg></button>
    <button class="ft" aria-label="Cordons"><svg class="i18" viewBox="0 0 16 16"><path d="M1 1v6h10z" fill="#1414a0"/><path d="M1 8h14M2 9q3 3 0 6M6 9q3 3 0 6M10 9q3 3 0 6M14 9q3 3 0 6" stroke="#333"/><use href="#funnel"/></svg></button>
    <button class="ft" aria-label="Repères"><svg class="i18" viewBox="0 0 16 16"><circle cx="7" cy="8" r="5.500" fill="#fff" stroke="#333"/><path d="M5 11l2-5 2 5M2 8h10M0 15l3-3" stroke="#333"/><use href="#funnel"/></svg></button>
    <button class="ft" aria-label="Filetages"><svg class="i18" viewBox="0 0 16 16"><path d="M1 2v9M10 2v9" stroke="#1414a0" stroke-dasharray="2 1"/><path d="M3 3h5v9l-2 3-3-3zM3 12h6" stroke="#222"/><use href="#funnel"/></svg></button>
    <button class="ft" aria-label="Blocs"><svg class="i18"><use href="#atext"/></svg><svg class="i18 over"><use href="#funnel"/></svg></button>
    <button class="ft" aria-label="Centre de masse"><svg class="i18" viewBox="0 0 16 16"><circle cx="7" cy="9" r="6" fill="#fff" stroke="#222"/><path d="M7 3a6 6 0 0 0-6 6h6zM7 9h6a6 6 0 0 1-6 6z" fill="#111"/><use href="#funnel"/></svg></button>
    <button class="ft" aria-label="Connexion"><svg class="i18" viewBox="0 0 16 16"><path d="M0 12h11" stroke="#111" stroke-width="2"/><rect x="10.500" y="9.500" width="5" height="5" fill="#30e040" stroke="#042"/><use href="#funnel"/></svg></button>
    <button class="ft" aria-label="Routage"><svg class="i18" viewBox="0 0 16 16"><path d="M0 12h15" stroke="#111" stroke-width="2"/><rect x="5.500" y="9.500" width="5" height="5" fill="#30e040" stroke="#042"/><use href="#funnel"/></svg></button>
  </div>
</div>

<footer class="status">
  <span class="grow">SolidWorks Premium 2012</span>
  <span class="cell c1">Sous-contrainte</span><span class="cell c2">Edition: Esquisse1</span><span class="cell c3"><svg class="i14"><use href="#lights"/></svg></span>
  <span class="cell c4">MMGS</span><i class="caret up"></i>
  <svg class="i16 help" viewBox="0 0 16 16"><rect x="1" y="1" width="14" height="14" fill="#d8f0e0" stroke="#234" stroke-width="1.500"/><path d="M5 6q0-2.500 3-2.500T11 6q0 1.500-3 3M8 11v2" stroke="#108030" stroke-width="2"/></svg>
  <svg class="i16" viewBox="0 0 16 16"><path d="M1 8l7-7 6 0 1 5-8 8q-4 2-6-6z" fill="url(#gGold)" stroke="#906000"/><circle cx="12" cy="4" r="1.200" fill="#fff" stroke="#906000"/><path d="M4 8l4 4M6 6l4 4" stroke="#b07c10"/></svg>
</footer>

<div class="win-bar">
  <button class="orb" aria-label="Démarrer"><svg class="i38" viewBox="0 0 40 40"><circle cx="20" cy="20" r="18" fill="url(#gOrb)" stroke="#35557a"/><path d="M11 13q5-3 8-1l-2 7q-4-2-8 1z" fill="#f06030"/><path d="M21 12q5 2 9 0l-2 8q-5 2-9-1z" fill="#90c830"/><path d="M8 22q5-3 8-1l-2 7q-4-2-8 1z" fill="#3c98e8"/><path d="M18 21q5 3 9 1l-2 8q-5 2-9-1z" fill="#f8c830"/></svg></button>
  <button class="wtask" aria-label="Internet Explorer"><svg class="i34" viewBox="0 0 34 34"><path d="M29 19H13q1 5 5 5 3 0 5-3h6q-3 9-11 9Q7 29 6 18 7 6 18 6q11 1 11 13zM13 15h9q-1-4-4-4-4 0-5 4z" fill="url(#gIe)" stroke="#1c64b8" stroke-width=".5"/><path d="M31 9Q33 2 27 3 16 6 8 17 0 29 4 31q4 1 8-2-5 2-6 0-1-3 5-11Q20 7 28 5q3 0 3 4z" fill="#f8c428"/></svg></button>
  <button class="wtask run" aria-label="Explorateur"><svg class="i34" viewBox="0 0 34 34"><path d="M2 8l2-4h8l2 2h16l2 3v20H2z" fill="#f4dc8c" stroke="#c8a040"/><path d="M6 5h5v2H6z" fill="#20b030"/><path d="M14 8h4v2h-4z" fill="#d04020"/><path d="M22 10h5v2h-5z" fill="#2878d0"/><path d="M2 12h30v17H2z" fill="#fbe8a4"/><path d="M6 32V22q0-2 3-2h16q3 0 3 2v10h-6v-7H12v7z" fill="#9fdcf4" stroke="#58a8d0"/></svg></button>
  <button class="wtask" aria-label="Lecteur"><svg class="i34" viewBox="0 0 34 34"><path d="M12 6h18v24H12z" fill="#78bce4" stroke="#4890c0"/><path d="M3 6h22v24H3z" fill="#a8d8f0" stroke="#5098c8"/><circle cx="14" cy="18" r="9" fill="#f08020" stroke="#fff"/><path d="M11 13l9 5-9 5z" fill="#fff"/></svg></button>
  <button class="wtask run" aria-label="SolidWorks"><svg class="i34" viewBox="0 0 24 24"><use href="#cube"/><text x="3" y="18" class="cube-s">S</text><text x="11" y="18" class="cube-s">W</text></svg></button>
  <div class="tray">
    <span class="lang">FR</span><i class="caret up white"></i>
    <svg class="i18" viewBox="0 0 16 16"><path d="M2 1v15" stroke="#fff" stroke-width="2"/><path d="M3 2h9v7H3z" fill="#fff" stroke="#667"/><circle cx="11" cy="11" r="4.500" fill="#e03030" stroke="#fff" stroke-width=".7"/><path d="M9 9l4 4M13 9l-4 4" stroke="#fff" stroke-width="1.500"/></svg>
    <svg class="i18" viewBox="0 0 16 16"><path d="M4.500 4.500h11v9h-11z" fill="#4868a0" stroke="#fff"/><path d="M1 1v4h4V1M3 5v10h4" stroke="#fff"/><path d="M8 8l7 7M15 8l-7 7" stroke="#c81818" stroke-width="2"/></svg>
    <svg class="i18" viewBox="0 0 16 16"><path d="M1 5h3l4-4v14l-4-4H1z" fill="#fff" stroke="#678"/><path d="M10 5q2 3 0 6M12 3q4 5 0 10" stroke="#fff" stroke-width="1.200"/></svg>
    <span class="clock">20:15<br>04/02/2014</span>
  </div>
  <button class="peek" aria-label="Bureau"></button>
</div>

<div class="vbox-status">
  <svg class="i18" viewBox="0 0 16 16"><path d="M2 3v10q6 5 12 0V3" fill="#3c98dc" stroke="#1c68a8"/><ellipse cx="8" cy="3" rx="6" ry="2.500" fill="#c8e8fc" stroke="#1c68a8"/><path d="M2 7q6 4 12 0M2 10q6 4 12 0" stroke="#c8e8fc"/></svg>
  <svg class="i18" viewBox="0 0 16 16"><circle cx="8" cy="8" r="7" fill="#b8ccf0" stroke="#5878b8"/><circle cx="8" cy="8" r="2.500" fill="#fff" stroke="#3858a8"/></svg>
  <svg class="i18" viewBox="0 0 16 16"><path d="M1 15l3-3" stroke="#556" stroke-width="2"/><path d="M3 11l7-9 4 3-6 8q-3 2-5-2z" fill="#d0daf0" stroke="#6070a0"/><path d="M11 1l4 3" stroke="#6070a0" stroke-width="2"/></svg>
  <svg class="i18" viewBox="0 0 16 16"><rect x="6.500" y="1.500" width="9" height="7" fill="#58a8e8" stroke="#234"/><rect x=".5" y="6.500" width="9" height="7" fill="#2878d8" stroke="#fff"/><path d="M2 15h6" stroke="#456"/></svg>
  <svg class="i18" viewBox="0 0 16 16"><path d="M1 3h5l1 2h8v9H1z" fill="#48a8f0" stroke="#2068b0"/><path d="M2 7h12" stroke="#b8e0ff"/></svg>
  <svg class="i18" viewBox="0 0 16 16"><rect x="2" y="2" width="12" height="12" fill="#ccc" stroke="#aaa" stroke-width="2" stroke-dasharray="1 1"/><path d="M5 5v4q3 5 6 0V5" stroke="#f4f4f4" stroke-width="1.500"/></svg>
  <i class="vsep"></i>
  <svg class="i18" viewBox="0 0 16 16"><circle cx="8" cy="8" r="7" fill="#c8d0dc" stroke="#68789c"/><path d="M5 6l6-3q4 4 0 8l-3 4-1-3 2-3-3-1z" fill="#38b038" stroke="#186818"/></svg>
  <svg class="i18" viewBox="0 0 16 16"><rect x="1" y="1" width="14" height="14" fill="#f8f8f0" stroke="#a89868" stroke-width="1.500"/><path d="M6 3h4v5h3l-5 5-5-5h3z" fill="#38c038" stroke="#188018"/></svg>
  <span>Ctrl droite</span>
</div>

<div class="host-panel">
  <button class="menu"><svg class="i18" viewBox="0 0 16 16"><circle cx="8" cy="8" r="4.500" stroke="#ddd" stroke-width="2"/><path d="M8 0v3M8 13v3M0 8h3M13 8h3M2.500 2.500l2 2M11.500 11.500l2 2M13.500 2.500l-2 2M4.500 11.500l-2 2" stroke="#ddd" stroke-width="1.500"/></svg>Menu</button>
  <div class="launch">
    <svg class="i24" viewBox="0 0 24 20"><path d="M1 1h22v6H1z" fill="#f0f0ea"/><path d="M1 6h22v13H1z" fill="url(#gGreen)" stroke="#6c8c48"/><path d="M5 13h14v5H5z" fill="#384828"/></svg>
    <svg class="i20 gap" viewBox="0 0 20 20"><circle cx="10" cy="10" r="9" fill="#2a6cb8"/><path d="M1 5q0 14 9 14t9-9q0-5-4-8 2 4 1 7-3 5-8 3 3 0 3-2-5 0-5-5-3 0-5 0z" fill="#f08018"/></svg>
    <svg class="i20"><use href="#bird"/></svg>
    <svg class="i20" viewBox="0 0 20 20"><rect x="1.500" y="1.500" width="17" height="17" rx="1" fill="#222" stroke="#ddd" stroke-width="1.500"/><path d="M5 5l3 2.500L5 10M9 11h4" stroke="#eee"/></svg>
    <svg class="i20"><use href="#gfolder"/></svg>
  </div>
  <div class="tasks">
    <button><svg class="i18"><use href="#bird"/></svg><span>[Inbox - m.maldona ...</span></button>
    <button><svg class="i18"><use href="#gfolder"/></svg><span>bielle manivelle</span></button>
    <button><svg class="i18" viewBox="0 0 20 20"><rect x="2" y="1" width="16" height="18" fill="#222" stroke="#ddd"/><circle cx="10" cy="9" r="5" fill="#b82020"/><path d="M3 16h14" stroke="#ddd" stroke-width="2"/></svg><span>[mecanique [file:/.../...</span></button>
    <button><svg class="i18"><use href="#vm"/></svg><span>Oracle VM VirtualBo...</span></button>
    <button class="on"><svg class="i18"><use href="#vm"/></svg><span>Win7 [En fonction] - ...</span></button>
    <button><svg class="i18" viewBox="0 0 20 20"><circle cx="10" cy="10" r="9" fill="#f0c820"/><path d="M10 10L2 5a9 9 0 0 1 16 1z" fill="#d83828"/><path d="M10 10l-1 9A9 9 0 0 1 2 5z" fill="#38a048"/><circle cx="10" cy="10" r="4" fill="#3878d8" stroke="#fff"/></svg><span>mecanique - Google...</span></button>
  </div>
  <div class="applets">
    <svg class="i16 far" viewBox="0 0 16 16"><path d="M3 9v4h10V9" stroke="#ccc" stroke-width="1.500"/></svg>
    <svg class="i20" viewBox="0 0 20 20"><path d="M2 8q0-4 5-4 3-4 7 0 3 1 2 5H3zM2 17q-2-5 4-5 3-4 7-1 5-1 5 4l-1 2z" fill="#2e2e2e"/></svg>
    <b class="wx">Nuageux 9 °C</b>
    <svg class="mon" viewBox="0 0 42 20"><rect width="42" height="20" fill="#686868"/><path d="M0 6H42M14 0V20M28 0V20" stroke="#999"/><path d="M0 9l4 1 4 2 5-2 4-1 5 2 6 0 5 1 9-1v9H0z" fill="url(#gCpu)"/><rect x=".5" y=".5" width="41" height="19" stroke="#ddd"/><text x="2" y="7" class="mon-t">CPU</text></svg>
    <svg class="mon" viewBox="0 0 42 20"><rect width="42" height="20" fill="url(#gHeat)"/><rect x=".5" y=".5" width="41" height="19" stroke="#ddd"/><text x="2" y="7" class="mon-t">MEM</text></svg>
    <svg class="i16 gap2" viewBox="0 0 16 16"><path d="M4 10l4-4 4 4" stroke="#ddd" stroke-width="1.500"/></svg>
    <svg class="i16" viewBox="0 0 16 16"><path d="M5 5l6 6-3 3V2l3 3-6 6" stroke="#ccc" stroke-width="1.200"/></svg>
    <svg class="i16" viewBox="0 0 16 16"><path d="M1 15l4-4M11 5l4-4" stroke="#ddd" stroke-width="1.500"/><path d="M4 9l5-5 3 3-5 5z" fill="#ddd"/></svg>
    <svg class="i16" viewBox="0 0 16 16"><path d="M3 6h2l3-3v10l-3-3H3z" fill="#ddd"/><path d="M10 6q1 2 0 4M12 4q3 4 0 8" stroke="#ccc"/></svg>
    <svg class="i20" viewBox="0 0 20 20"><path d="M10 1q4 2 8 2 0 12-8 16Q2 15 2 3q4 0 8-2z" fill="#d8dce4"/><circle cx="10" cy="9" r="5.500" fill="#3870b8"/><path d="M10 5.500v1.500M10 8.500v4" stroke="#fff" stroke-width="1.500"/></svg>
    <b class="date">mar. févr.&nbsp; 4, 20:15</b>
    <svg class="i16" viewBox="0 0 16 16"><path d="M1.500 3.500h10v8h-10zM13 6h2v8H5v-2" stroke="#ccc" stroke-width="1.500"/></svg>
  </div>
</div>
</body>
</html>
```
FILE: styles.css
```css
* { box-sizing: border-box; }
html, body { height: 100%; }
body {
  margin: 0;
  display: flex;
  flex-direction: column;
  min-height: 100vh;
  overflow: hidden;
  background: #d6d6d6;
  color: #1c1c2c;
  font-family: "Noto Sans", "Open Sans", sans-serif;
  font-size: 11px;
}
button { margin: 0; padding: 0; border: 0; background: none; color: inherit; font: inherit; }
button { display: flex; align-items: center; justify-content: center; }
svg { display: block; fill: none; flex: none; }
.defs { position: absolute; width: 0; height: 0; }
.i14 { width: 14px; height: 14px; }
.i16 { width: 16px; height: 16px; }
.i18 { width: 18px; height: 18px; }
.i20 { width: 20px; height: 20px; }
.i22 { width: 22px; height: 22px; }
.i24 { width: 24px; height: 20px; }
.i34 { width: 34px; height: 34px; }
.i38 { width: 38px; height: 38px; }
.cube-s { font: bold 11px "Liberation Sans", sans-serif; fill: #fff; }

.caret { display: block; border: 3px solid transparent; border-top: 4px solid #26263c; border-bottom: 0; }
.caret.right { border: 4px solid transparent; border-left-color: #26263c; border-right: 0; }
.caret.left { border: 4px solid transparent; border-right-color: #26263c; border-left: 0; }
.caret.up { border: 3px solid transparent; border-bottom: 4px solid #26263c; border-top: 0; }
.caret.white { border-width: 0 5px 5px; border-bottom-color: #fff; }
.grip { width: 3px; height: 22px; background: repeating-linear-gradient(#8a90a8 0 2px, transparent 2px 5px); }
.vsep { width: 1px; height: 18px; background: #70747f; }

/* VirtualBox window frame */
.vbox-head { background: linear-gradient(#e6e6e6, #d6d6d6 24px); flex: none; font-family: "DejaVu Sans", sans-serif; border-top: 1px solid #f4f4f4; }
.vbox-title { display: flex; height: 22px; align-items: center; justify-content: flex-end; }
.vbox-title h1 { margin: 0; flex: 1; padding-left: 64px; text-align: center; font-size: 13px; line-height: 20px; color: #6a6a6a; }
.vbox-ctl { display: flex; width: 126px; padding-left: 61px; }
.vbox-ctl button { width: 21px; font-size: 14px; font-weight: bold; line-height: 20px; color: #8c8c8c; }
.vbox-menu { display: flex; height: 23px; gap: 19px; padding: 0 0 2px 12px; font-size: 12px; color: #333; }

/* SolidWorks menu bar */
.sw-bar { position: relative; display: flex; flex: none; height: 29px; align-items: center; background: linear-gradient(#edf0fb, #b9bfd8); border-bottom: 1px solid #4a5060; }
.brand { display: flex; width: 125px; height: 28px; align-items: center; gap: 4px; padding-left: 2px; background: linear-gradient(#dadeeb, #b4b9cf); }
.brand-name { font: italic 14px Lato, sans-serif; color: #111; }
.brand-name b { font-weight: 900; }
.brand-arrow { width: 10px; height: 28px; background: #8c90b4; }
.std-tools { display: flex; align-items: center; padding-left: 31px; }
.tool, .drop { width: 18px; height: 22px; }
.tool.wide { width: 23px; }
.drop.narrow { width: 12px; }
.split { display: flex; width: 37px; height: 22px; border: 1px solid #6a6e88; border-radius: 4px; background: #b6b8dc; overflow: hidden; }
.split.pull { margin: 0 -2px; }
.split button { flex: 1; }
.split .split-d { flex: none; width: 13px; background: #e4e6f2; border-left: 1px solid #8a8ea8; }
.doc-name { flex: 1; text-align: center; padding-left: 4px; font: 11px Roboto, sans-serif; color: #222; }
.sw-right { display: flex; align-items: center; gap: 6px; padding-right: 4px; }
.search { display: flex; width: 271px; height: 23px; align-items: center; padding-left: 4px; border: 1px solid #555a6a; border-radius: 4px; background: linear-gradient(#e2e6f2, #fff); }
.search input { flex: 1; width: 0; border: 0; background: none; font: 11px Roboto, sans-serif; padding: 0 0 0 4px; color: #555; }
.search input::placeholder { color: #606470; opacity: 1; }
.search-go { width: 24px; height: 21px; border-left: 1px solid #d4d8e4; }
.search-d { width: 16px; }
.sw-right .drop { width: 10px; }
.sw-right .wbtn { width: 17px; }

/* capture toolbar */
.capture-bar { flex: none; height: 31px; background: linear-gradient(#eff2fc, #dde1f2); border-bottom: 1px solid #989ba6; }
.capture-tools { display: flex; width: 89px; height: 30px; align-items: center; padding-left: 4px; background: linear-gradient(#e8ebf6, #c4c9dc); border-right: 1px solid #fff; }
.cap { width: 23px; }
.capture-tools .grip + .cap { margin-left: 5px; }

/* ribbon */
.ribbon { position: relative; display: flex; flex: none; height: 74px; padding-left: 7px; background: linear-gradient(#fdfdff, #f4f6fb 45%, #d0d4e2); border-bottom: 2px solid #565b6e; color: #2d2d62; font: 11px/13px Roboto, "Noto Sans", sans-serif; }
.big { flex-direction: column; justify-content: flex-start; padding: 6px 0 4px; text-align: center; white-space: nowrap; }
.big.low { padding-top: 13px; }
.big.tall { gap: 13px; }
.big .caret { margin-top: auto; }
.big:disabled { color: #77798a; }
.big:disabled .caret { border-top-color: #a0a2ac; }
.big.on { height: 69px; margin-top: 2px; padding-top: 4px; border: 1px solid #8286a0; border-radius: 4px; background: linear-gradient(#b4b6da 55px, #8286a0 55px 56px, #e4e6f0 56px); }
.w48 { width: 48px; }
.w49 { width: 49px; }
.w50 { width: 50px; }
.w52 { width: 52px; }
.w56 { width: 56px; }
.w60 { width: 62px; }
.w74 { width: 74px; }
.w84 { width: 84px; }
.w100 { width: 100px; }
.sep { width: 1px; margin: 2px 0 4px; background: #c0c4d2; }
.sketch-grid { display: grid; grid-template-columns: 20px 16px 20px 16px 20px 16px 20px; grid-template-rows: repeat(3, 23px); padding: 1px 2px 0 4px; }
.list { display: grid; width: 198px; grid-template-rows: repeat(3, 23px); padding-top: 2px; }
.list button { justify-content: flex-start; gap: 6px; padding-right: 5px; }
.list span { flex: 1; text-align: left; }
.ds { position: absolute; right: 8px; top: 1px; width: 72px; height: 70px; fill: #d3daea; }

/* workspace */
.workspace { display: grid; flex: 1; min-height: 0; grid-template: 20px 1fr / 221px 1fr; background: #c4c8d3; }
.cmd-tabs { grid-area: 1 / 1 / 2 / 3; z-index: 1; display: flex; justify-self: start; font: 12px "Liberation Sans", Arial, sans-serif; color: #505468; }
.cmd-tabs button { padding: 0 8px; height: 19px; background: #b6b9cf; border: 1px solid #585c70; border-width: 0 1px 2px 0; }
.cmd-tabs .on { height: 21px; padding: 0 7px; background: #f2f3f8; font-weight: bold; color: #1c1c28; border-left-width: 1px; }
.side { grid-area: 2 / 1 / 3 / 2; display: flex; min-height: 0; background: linear-gradient(#d8dcec, #b4bace); }
.strip { display: flex; flex-direction: column; flex: none; align-items: center; width: 28px; height: 207px; padding-top: 7px; background: linear-gradient(90deg, #f4f6fc, #bcc2d6); border-bottom: 1px solid #9094a4; }
.grip-h { width: 22px; height: 2px; margin-bottom: 8px; background: repeating-linear-gradient(90deg, #8a90a8 0 2px, transparent 2px 4px); }
.st { position: relative; height: 22px; color: #222; }
.off { color: #94969e; }
.over { position: absolute; }
.panel { position: relative; display: flex; flex: 1; flex-direction: column; min-width: 0; background: #e1e4ec; border-right: 2px solid #5d6274; border-top: 1px solid #8a8ea4; }
.ptabs { display: flex; height: 29px; gap: 2px; padding-top: 8px; background: #ccd0e6; border-bottom: 1px solid #8488a0; }
.ptabs button { width: 26px; height: 21px; background: #b4b8d0; border: 1px solid #7c8098; border-bottom: 0; border-radius: 4px 4px 0 0; }
.ptabs .on { background: #e8eaf4; }
.ptabs .more { flex: 1; text-align: right; padding-right: 5px; font: 18px/18px "Noto Sans", sans-serif; color: #333a58; }
.filter { display: flex; height: 17px; margin: 2px 1px 0; align-items: center; padding-left: 5px; border: 1px solid #7c8098; border-radius: 8px; background: #fff; }
.filter input { flex: 1; width: 0; height: 13px; border: 0; background: none; }
.tree { padding: 2px 0 2px 2px; border-bottom: 2px solid #8c90a2; white-space: nowrap; overflow: hidden; color: #101018; }
.root { display: flex; height: 18px; align-items: center; gap: 3px; }
.tree ul { list-style: none; margin: 0 0 0 8px; padding: 0; border-left: 1px dotted #777; }
.tree li { position: relative; display: flex; height: 18px; align-items: center; gap: 5px; padding-left: 10px; background: linear-gradient(#999, #999) 0 9px / 9px 1px no-repeat; }
.tree .plus::before { content: "+"; position: absolute; left: -5px; top: 5px; width: 9px; height: 9px; border: 1px solid #8a8e9c; background: #fff; font: 9px/7px "DejaVu Sans", sans-serif; text-align: center; }
.panel-rest { flex: 1; }
.hscroll { display: flex; height: 17px; margin-bottom: 3px; align-items: center; padding: 0 4px 0 5px; background: #eeeff2; border-top: 1px solid #fff; }
.hscroll .thumb { width: 110px; height: 15px; margin: 0 auto 0 8px; border: 1px solid #9a9ca4; border-radius: 2px; background: linear-gradient(#f8f8f8, #d0d2d8); text-align: center; font: 9px/12px "Liberation Sans", sans-serif; color: #555; }
.handle { position: absolute; right: -10px; top: 400px; z-index: 2; flex-direction: column; gap: 1px; width: 11px; height: 29px; background: #e1e4ec; border: 1px solid #5d6274; border-left: 0; border-radius: 0 4px 4px 0; }
.handle .caret.left { border-width: 4px 4px 4px 0; border-right-color: #404880; }

.canvas { grid-area: 1 / 2 / 3 / 3; position: relative; min-height: 0; background: #c4c8d3; border-right: 1px solid #000; border-bottom: 1px solid #000; }
.sketch { position: absolute; left: 0; top: 0; width: 100%; height: 100%; }
.note { font: bold 26px Lato, sans-serif; font-variant-ligatures: none; fill: #00f; }
.dim { font: bold 17px Lato, sans-serif; fill: #000; }
.dim.gray { fill: #808080; }
.view-head { position: relative; display: grid; grid-template-columns: 1fr auto 1fr; padding: 6px 4px 0 0; }
.view-tools { grid-column: 2; display: flex; }
.vt { width: 23px; height: 16px; }
.vd { width: 10px; }
.doc-ctl { display: flex; justify-content: flex-end; gap: 7px; padding-right: 5px; }
.confirm { position: absolute; right: 35px; top: 27px; width: 70px; height: 60px; }
.task-tabs { position: absolute; right: -1px; top: 60px; }
.task-tabs button { width: 24px; height: 24px; background: #b4b8cc; border: 1px solid #6a6e88; border-right: 0; border-radius: 4px 0 0 4px; }
.task-tabs .on { background: #eef0f6; }
.triad { position: absolute; left: 32px; bottom: 45px; width: 44px; height: 56px; }
.ax { position: absolute; font: 12px/12px "Liberation Sans", sans-serif; }
.ax.y { left: 36px; bottom: 87px; color: #2a902a; }
.ax.x { left: 71px; bottom: 50px; color: #d02020; }
.view-name { position: absolute; left: 12px; bottom: 0; font: bold 14px/18px Lato, sans-serif; color: #34345c; }

/* model / motion tabs */
.model-tabs { display: flex; flex: none; height: 14px; padding-left: 28px; background: linear-gradient(90deg, #b8bed2 28px, #dfe1e9 28px); font: 12px/13px "Liberation Sans", Arial, sans-serif; color: #111; }
.nav4 { display: flex; width: 68px; padding-left: 3px; background: #b6b9cf; }
.nav4 button { width: 16px; border: 1px solid #9a9db4; font-size: 9px; color: #8488a4; }
.mt { padding: 0 11px; background: #b6b9cf; border: 1px solid #4a4e60; border-width: 0 2px 1px 0; }
.mt.on { background: #dcdfea; font-weight: bold; }
.mt + .mt { padding: 0 15px 0 6px; }

/* selection filters */
.filter-bar { flex: none; height: 33px; background: linear-gradient(#edf0fb, #b9bfd4 29px, #fff 30px 31px, #4a5060 31px 32px, #c8ccdc 32px); }
.filter-tools { display: flex; width: 757px; height: 29px; align-items: center; padding-left: 4px; border-right: 1px solid #8c90a0; }
.filter-tools .grip { margin-right: 4px; }
.ft { position: relative; width: 23px; height: 22px; flex: none; color: #222; }
.filter-tools .split { margin-left: 1px; }
.filter-tools .vsep { margin: 0 5px 0 3px; }
.dim1 { opacity: .8; }

.status { display: flex; flex: none; height: 18px; align-items: center; padding: 0 6px 0 2px; background: linear-gradient(#ced2e4, #b2b5c8); border-bottom: 1px solid #34485a; color: #101018; }
.status .grow { flex: 1; }
.cell { height: 14px; line-height: 14px; border-right: 1px solid #9ea2b4; }
.c1 { width: 90px; }
.c2 { width: 111px; padding-left: 12px; }
.c3 { width: 29px; padding-left: 10px; }
.c4 { width: 102px; padding-left: 40px; border: 0; }
.status .help { margin: 0 49px 0 15px; }

/* Windows taskbar */
.win-bar { display: flex; flex: none; height: 39px; background: linear-gradient(90deg, #7c90aa, #a6c0dc 84px, #a6c0dc calc(100% - 264px), #8094ac calc(100% - 230px)); }
.orb { width: 54px; }
.wtask { width: 60px; margin-right: 2px; }
.orb + .wtask { width: 65px; margin-left: 2px; margin-right: 0; }
.wtask.run { border: 1px solid #4c6078; border-radius: 3px; background: linear-gradient(135deg, #e4ecf4, #ccd9e8); }
.tray { display: flex; flex: 1; align-items: center; justify-content: flex-end; gap: 7px; color: #fff; }
.tray .lang { padding: 0 6px 6px 0; font-size: 12px; }
.tray .caret { margin-right: 4px; }
.clock { width: 80px; text-align: center; line-height: 17px; }
.peek { width: 14px; height: 38px; border: 1px solid #42546a; background: linear-gradient(135deg, #a8b8c8, #60748c); }

.vbox-status { display: flex; flex: none; height: 22px; align-items: center; justify-content: flex-end; gap: 3px; padding-right: 3px; background: #d6d6d6; font: 11px "DejaVu Sans", sans-serif; color: #333; }
.vbox-status .vsep { margin: 0 3px; background: #fff; }

/* host desktop panel */
.host-panel { display: flex; flex: none; height: 26px; align-items: center; background: linear-gradient(#5e5e5e, #484848); border-top: 1px solid #7c7c7c; font: 11px "DejaVu Sans", sans-serif; color: #e4e4e4; }
.menu { width: 71px; gap: 5px; font-weight: bold; justify-content: flex-start; padding-left: 5px; color: #ddd; }
.launch { display: flex; align-items: center; width: 148px; gap: 2px; }
.launch .gap { margin-left: 15px; }
.tasks { display: flex; width: 972px; gap: 3px; }
.tasks button { flex: 1; height: 25px; min-width: 0; justify-content: flex-start; gap: 3px; padding: 0 6px; border: 1px solid #7a7a7a; border-radius: 3px 3px 0 0; background: linear-gradient(#6a6a6a, #5c5c5c); white-space: nowrap; }
.tasks .on { background: linear-gradient(#969696, #707070); }
.applets { display: flex; flex: 1; align-items: center; justify-content: flex-end; gap: 4px; padding-right: 1px; }
.applets .far { margin-right: 6px; }
.wx, .date { white-space: nowrap; }
.date { margin: 0 3px; }
.mon { width: 42px; height: 21px; }
.mon-t { font: 8px "DejaVu Sans", sans-serif; fill: #eee; }
.gap2 { margin-left: 1px; }
```
